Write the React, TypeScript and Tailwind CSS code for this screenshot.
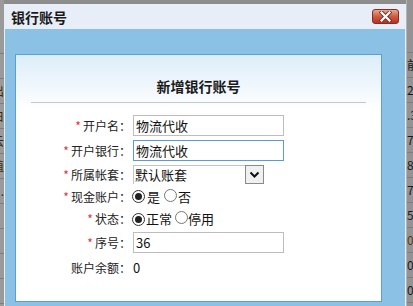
import React from 'react';

const leftRows = ['', '出', '白', '云', '值', '.', '', '', '', '', ''];
const rightRows = ['前', '2', '.3', '7', '80', '72', '5.', '0', '00', '0.1', ''];

const Radio: React.FC<{ checked?: boolean }> = ({ checked }) => (
  <span
    className={`inline-flex items-center justify-center w-[13px] h-[13px] rounded-full border bg-white ${
      checked ? 'border-[#333]' : 'border-[#777]'
    }`}
  >
    {checked && <span className="w-[7px] h-[7px] rounded-full bg-[#222]" />}
  </span>
);

const Label: React.FC<{ text: string; required?: boolean }> = ({ text, required }) => (
  <div className="w-[115px] flex justify-end items-center text-[12px] text-[#222] whitespace-nowrap">
    {required && <span className="text-[#e8303a] mr-[2px] text-[12px] leading-none">*</span>}
    <span>{text}：</span>
  </div>
);

export default function App() {
  return (
    <div
      className="w-[413px] h-[306px] flex bg-[#8d8d8d] overflow-hidden"
      style={{ fontFamily: '"Noto Sans CJK SC", "Liberation Sans", sans-serif' }}
    >
      {/* table behind, left edge */}
      <div className="w-[4px] pt-[52px] bg-[#9a9a9a] overflow-hidden border-t border-transparent">
        <div className="border-t border-[#7d7d7d]">
          {leftRows.map((t, i) => (
            <div
              key={i}
              className="h-[25px] border-b border-[#7d7d7d] flex justify-end items-center text-[12px] text-[#3a2a10] whitespace-nowrap overflow-hidden"
            >
              {t}
            </div>
          ))}
        </div>
      </div>

      {/* dialog */}
      <div className="w-[402px] mt-[4px] flex flex-col bg-[#e7eef7] px-px">
        <div className="h-[25px] flex items-center justify-between pl-[6px] pr-[6px]">
          <span className="text-[14px] font-bold text-[#1a1a1a] leading-none">银行账号</span>
          <button className="w-[27px] h-[15px] rounded-[3px] border border-[#8a2c20] bg-[linear-gradient(to_bottom,#eaa58f,#d05a42_50%,#b9301f)] flex items-center justify-center">
            <svg width="13" height="11" viewBox="0 0 13 11">
              <path d="M2.5 1.5 L10.5 9.5 M10.5 1.5 L2.5 9.5" stroke="#6b3328" strokeWidth="4" strokeLinecap="square" />
              <path d="M2.5 1.5 L10.5 9.5 M10.5 1.5 L2.5 9.5" stroke="#ffffff" strokeWidth="2.2" strokeLinecap="square" />
            </svg>
          </button>
        </div>

        <div className="flex-1 bg-[#8cc1e6] pt-[25px] pl-[10px]">
          <div className="w-[367px] h-[248px] border border-[#5a9fd6] bg-[linear-gradient(to_bottom,#dcedf9,#ffffff_55px)]">
            <div className="pt-[21px] h-[41px] text-center text-[14px] font-bold leading-[20px] text-[#1a1a1a]">
              新增银行账号
            </div>
            <div className="mt-[6px] mx-[15px] h-px bg-[#c8c8c8]" />

            <div className="mt-[10px] flex flex-col">
              <div className="h-[25px] flex items-center">
                <Label text="开户名" required />
                <div className="ml-[2px] w-[151px] h-[21px] border border-[#bdbdbd] bg-white pl-[2px] text-[13px] leading-[19px] text-[#111]">
                  物流代收
                </div>
              </div>
              <div className="h-[25px] flex items-center">
                <Label text="开户银行" required />
                <div className="ml-[2px] w-[151px] h-[21px] border border-[#5b9bd5] bg-white pl-[2px] text-[13px] leading-[19px] text-[#111]">
                  物流代收
                </div>
              </div>
              <div className="h-[23px] flex items-center">
                <Label text="所属帐套" required />
                <div className="ml-[2px] w-[131px] h-[19px] flex border-l border-t border-[#c4c4c4] bg-white">
                  <div className="flex-1 pl-[1px] text-[13px] leading-[18px] text-[#111]">默认账套</div>
                  <div className="w-[19px] h-[19px] -mt-px border border-[#8a8a8a] bg-[#f0f0f0] flex items-center justify-center">
                    <svg width="11" height="8" viewBox="0 0 11 8">
                      <path d="M1.5 1.5 L5.5 5.5 L9.5 1.5" stroke="#111" strokeWidth="2" fill="none" />
                    </svg>
                  </div>
                </div>
              </div>
              <div className="h-[21px] flex items-center">
                <Label text="现金账户" required />
                <div className="ml-[1px] flex items-center text-[13px] text-[#111]">
                  <Radio checked />
                  <span className="ml-[2px]">是</span>
                  <span className="ml-[4px]"><Radio /></span>
                  <span className="ml-px">否</span>
                </div>
              </div>
              <div className="h-[24px] flex items-center">
                <Label text="状态" required />
                <div className="ml-[1px] flex items-center text-[13px] text-[#111]">
                  <Radio checked />
                  <span className="ml-px">正常</span>
                  <span className="ml-[3px]"><Radio /></span>
                  <span>停用</span>
                </div>
              </div>
              <div className="h-[23px] flex items-center">
                <Label text="序号" required />
                <div className="ml-[2px] w-[151px] h-[21px] border border-[#bdbdbd] bg-white pl-[2px] text-[13px] leading-[19px] text-[#111]">
                  36
                </div>
              </div>
              <div className="h-[28px] flex items-center">
                <Label text="账户余额" />
                <span className="ml-[2px] text-[13px] text-[#111]">0</span>
              </div>
            </div>
          </div>
        </div>
      </div>

      {/* table behind, right edge */}
      <div className="w-[7px] pt-[52px] bg-[#939393] border-l border-[#b4b4b4] overflow-hidden">
        <div className="border-t border-[#7d7d7d]">
          {rightRows.map((t, i) => (
            <div
              key={i}
              className={`h-[25px] border-b border-[#7d7d7d] flex items-center text-[12px] whitespace-nowrap overflow-hidden ${
                i === 7 ? 'text-[#5a3a10]' : 'text-[#1a1a1a]'
              }`}
            >
              {t}
            </div>
          ))}
        </div>
      </div>
    </div>
  );
}
